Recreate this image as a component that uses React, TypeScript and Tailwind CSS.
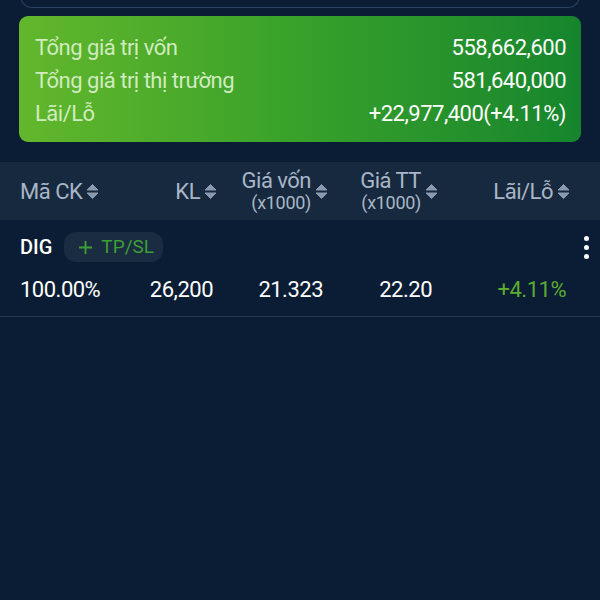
import React from "react";

type Col = { label: string; sub?: string; width: string; align: "left" | "right" };

const cols: Col[] = [
  { label: "Mã CK", width: "w-[120px]", align: "left" },
  { label: "KL", width: "w-[77px]", align: "right" },
  { label: "Giá vốn", sub: "(x1000)", width: "w-[111px]", align: "right" },
  { label: "Giá TT", sub: "(x1000)", width: "w-[110px]", align: "right" },
  { label: "Lãi/Lỗ", width: "w-[132px]", align: "right" },
];

function SortIcon() {
  return (
    <svg width="13" height="17" viewBox="0 0 13 17" className="shrink-0">
      <path d="M6.5 1.5 L12 7 L1 7 Z" fill="#8a9aae" stroke="#8a9aae" strokeWidth="1" strokeLinejoin="round" />
      <path d="M1 10 L12 10 L6.5 15.5 Z" fill="#8a9aae" stroke="#8a9aae" strokeWidth="1" strokeLinejoin="round" />
    </svg>
  );
}

function SummaryRow({ label, value }: { label: string; value: string }) {
  return (
    <div className="flex justify-between leading-[33px]">
      <span className="text-[#d0ebbf]">{label}</span>
      <span className="text-white">{value}</span>
    </div>
  );
}

export default function App() {
  return (
    <div
      className="w-[600px] h-[600px] overflow-hidden bg-[#0b1d35] text-[22px] tracking-[-0.5px]"
      style={{ fontFamily: "Roboto, 'Noto Sans', sans-serif" }}
    >
      {/* bottom of the box above, cut off by the screen */}
      <div className="mx-5 -mt-[32px] h-[40px] rounded-b-[12px] border-x border-b border-[#2b4360]" />

      <div className="mx-[19px] mt-[8px] rounded-[9px] bg-gradient-to-r from-[#62b72c] via-[#37a12a] to-[#15852d] pl-4 pr-[15px] pt-[15px] pb-[12px]">
        <SummaryRow label="Tổng giá trị vốn" value="558,662,600" />
        <SummaryRow label="Tổng giá trị thị trường" value="581,640,000" />
        <SummaryRow label="Lãi/Lỗ" value="+22,977,400(+4.11%)" />
      </div>

      <div className="mt-5 h-[58px] bg-[#16293f] pl-5 flex items-center text-[#a9b6c6]">
        {cols.map((c) => (
          <div
            key={c.label}
            className={
              c.align === "left"
                ? `${c.width} flex items-center gap-[4px]`
                : `${c.width} flex items-center justify-end gap-[4px]`
            }
          >
            <div className="flex flex-col items-end">
              <span className="leading-[23px]">{c.label}</span>
              {c.sub && <span className="text-[18px] tracking-[-0.3px] leading-[21px]">{c.sub}</span>}
            </div>
            <SortIcon />
          </div>
        ))}
      </div>

      <div className="border-b border-[#21364f] pl-5 pt-[12px] pb-[14px]">
        <div className="flex items-center justify-between h-[30px]">
          <div className="flex items-center gap-[12px]">
            <span className="text-white font-medium text-[20px] tracking-normal">DIG</span>
            <span className="flex items-center gap-[8px] h-[30px] rounded-[12px] bg-[#1a2c41] pl-[14px] pr-[9px] text-[19px] tracking-normal text-[#3c9e34]">
              <svg width="15" height="15" viewBox="0 0 16 16">
                <path d="M8 1 V15 M1 8 H15" stroke="#3c9e34" strokeWidth="2" />
              </svg>
              TP/SL
            </span>
          </div>
          <div className="flex flex-col gap-[4px] items-center w-[26px] pr-[1px]">
            <span className="block w-[5px] h-[5px] rounded-full bg-white" />
            <span className="block w-[5px] h-[5px] rounded-full bg-white" />
            <span className="block w-[5px] h-[5px] rounded-full bg-white" />
          </div>
        </div>
        <div className="mt-[16px] flex items-center leading-[24px] text-white">
          <span className="w-[120px]">100.00%</span>
          <span className="w-[77px] text-right pr-[4px]">26,200</span>
          <span className="w-[111px] text-right pr-[5px]">21.323</span>
          <span className="w-[110px] text-right pr-[6px]">22.20</span>
          <span className="w-[132px] text-right pr-[4px] text-[#5bab2f]">+4.11%</span>
        </div>
      </div>
    </div>
  );
}
